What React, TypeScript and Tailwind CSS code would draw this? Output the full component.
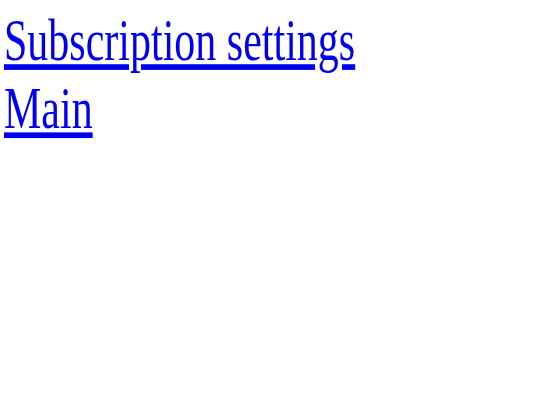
import React from 'react';

export default function App() {
  return (
    <div className="min-h-[405px] w-[540px] bg-white pl-[4px] pt-[6px] font-['Liberation_Serif',serif]">
      <div className="flex origin-top-left scale-y-[1.42] flex-col items-start text-[42px] leading-[1.15]">
        <a href="#" className="text-[#0000ee] underline">Subscription settings</a>
        <a href="#" className="text-[#0000ee] underline">Main</a>
      </div>
    </div>
  );
}
